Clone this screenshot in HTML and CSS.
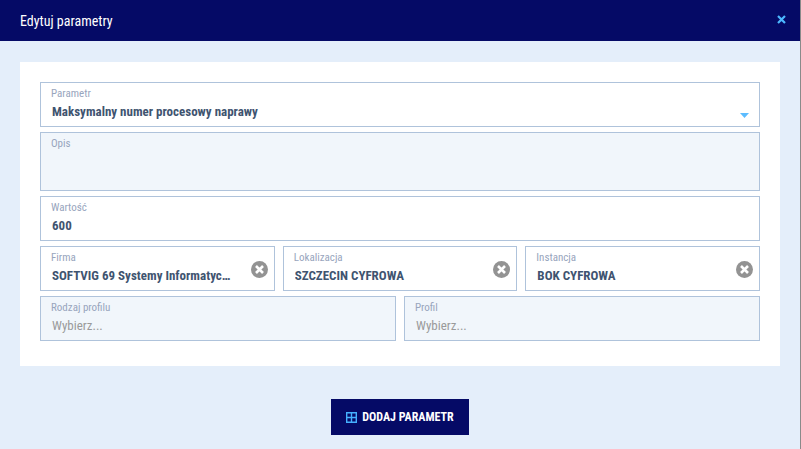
FILE: index.html
```html
<!DOCTYPE html>
<html lang="pl">
<head>
<meta charset="utf-8">
<title>Edytuj parametry</title>
<link rel="stylesheet" href="styles.css">
</head>
<body>
<div class="dialog">
  <header class="head">
    <h1 class="title">Edytuj parametry</h1>
    <svg class="close" width="9" height="9" viewBox="0 0 9 9"><path d="M1 1l7 7M8 1L1 8" stroke="#4db8ff" stroke-width="2.2"/></svg>
  </header>
  <main class="body">
    <section class="panel">
      <div class="field">
        <span class="label">Parametr</span>
        <span class="value">Maksymalny numer procesowy naprawy</span>
        <svg class="caret" width="9" height="5" viewBox="0 0 9 5"><path d="M0 0h9L4.5 5z" fill="#5cbcff"/></svg>
      </div>
      <div class="field disabled tall"><span class="label">Opis</span></div>
      <div class="field">
        <span class="label">Wartość</span>
        <span class="value">600</span>
      </div>
      <div class="row">
        <div class="field">
          <span class="label">Firma</span>
          <span class="value clip">SOFTVIG 69 Systemy Informatyczne</span>
          <svg class="clear" width="17" height="17" viewBox="0 0 17 17"><circle cx="8.5" cy="8.5" r="8.5" fill="#939393"/><path d="M5 5l7 7M12 5l-7 7" stroke="#fff" stroke-width="2.6"/></svg>
        </div>
        <div class="field">
          <span class="label">Lokalizacja</span>
          <span class="value clip">SZCZECIN CYFROWA</span>
          <svg class="clear" width="17" height="17" viewBox="0 0 17 17"><circle cx="8.5" cy="8.5" r="8.5" fill="#939393"/><path d="M5 5l7 7M12 5l-7 7" stroke="#fff" stroke-width="2.6"/></svg>
        </div>
        <div class="field">
          <span class="label">Instancja</span>
          <span class="value clip">BOK CYFROWA</span>
          <svg class="clear" width="17" height="17" viewBox="0 0 17 17"><circle cx="8.5" cy="8.5" r="8.5" fill="#939393"/><path d="M5 5l7 7M12 5l-7 7" stroke="#fff" stroke-width="2.6"/></svg>
        </div>
      </div>
      <div class="row">
        <div class="field disabled">
          <span class="label">Rodzaj profilu</span>
          <span class="value placeholder">Wybierz...</span>
        </div>
        <div class="field disabled">
          <span class="label">Profil</span>
          <span class="value placeholder">Wybierz...</span>
        </div>
      </div>
    </section>
    <div class="actions">
      <button class="add" type="button">
        <svg width="11" height="11" viewBox="0 0 11 11"><path d="M.7.7h9.6v9.6H.7zM5.5 1v9M1 5.5h9" fill="none" stroke="#45b0ff" stroke-width="1.4"/></svg>
        DODAJ PARAMETR
      </button>
    </div>
  </main>
</div>
</body>
</html>
```
FILE: styles.css
```css
* { box-sizing: border-box; }
html, body { margin: 0; height: 100%; background: #8a8a8a; overflow: hidden; }
body { font-family: Roboto, sans-serif; font-stretch: 75%; }
.dialog { width: 800px; height: 449px; display: flex; flex-direction: column; background: #e4eefa; }
.head {
  height: 41px; background: #050a66; color: #fff; flex: none;
  display: flex; align-items: center; justify-content: space-between;
  padding: 0 14px 0 20px;
}
.title { margin: 0; font-size: 14px; font-weight: 400; }
.close { display: block; margin-top: -2px; }
.body { flex: 1; padding: 21px 20px 0; display: flex; flex-direction: column; }
.panel {
  background: #fff; padding: 20px 20px 25px;
  display: flex; flex-direction: column; gap: 5px;
}
.row { display: flex; gap: 8px; }
.row > .field { flex: 1 1 0; min-width: 0; }
.field {
  position: relative; height: 45px; border: 1px solid #afc3db; background: #fff;
  padding: 4px 10px 0; display: flex; flex-direction: column;
}
.field.tall { height: 59px; }
.field.disabled { background: #f1f6fb; }
.label { font-size: 11px; line-height: 13px; color: #98a5bd; }
.value {
  font-size: 13px; font-weight: 700; line-height: 18px; margin: 3px 0 0 1px;
  color: #3f5470; white-space: nowrap;
}
.clip { overflow: hidden; text-overflow: ellipsis; padding-right: 32px; }
.placeholder { font-weight: 400; color: #9a9a9a; }
.caret { position: absolute; right: 10px; bottom: 8px; }
.clear { position: absolute; right: 6px; top: 14px; }
.actions { display: flex; justify-content: center; padding-top: 33px; }
.add {
  width: 138px; height: 36px; border: 0; background: #050a66; color: #fff;
  font: 700 12px Roboto, sans-serif; font-stretch: 75%; display: flex; align-items: center; justify-content: center; gap: 5px;
}
```
